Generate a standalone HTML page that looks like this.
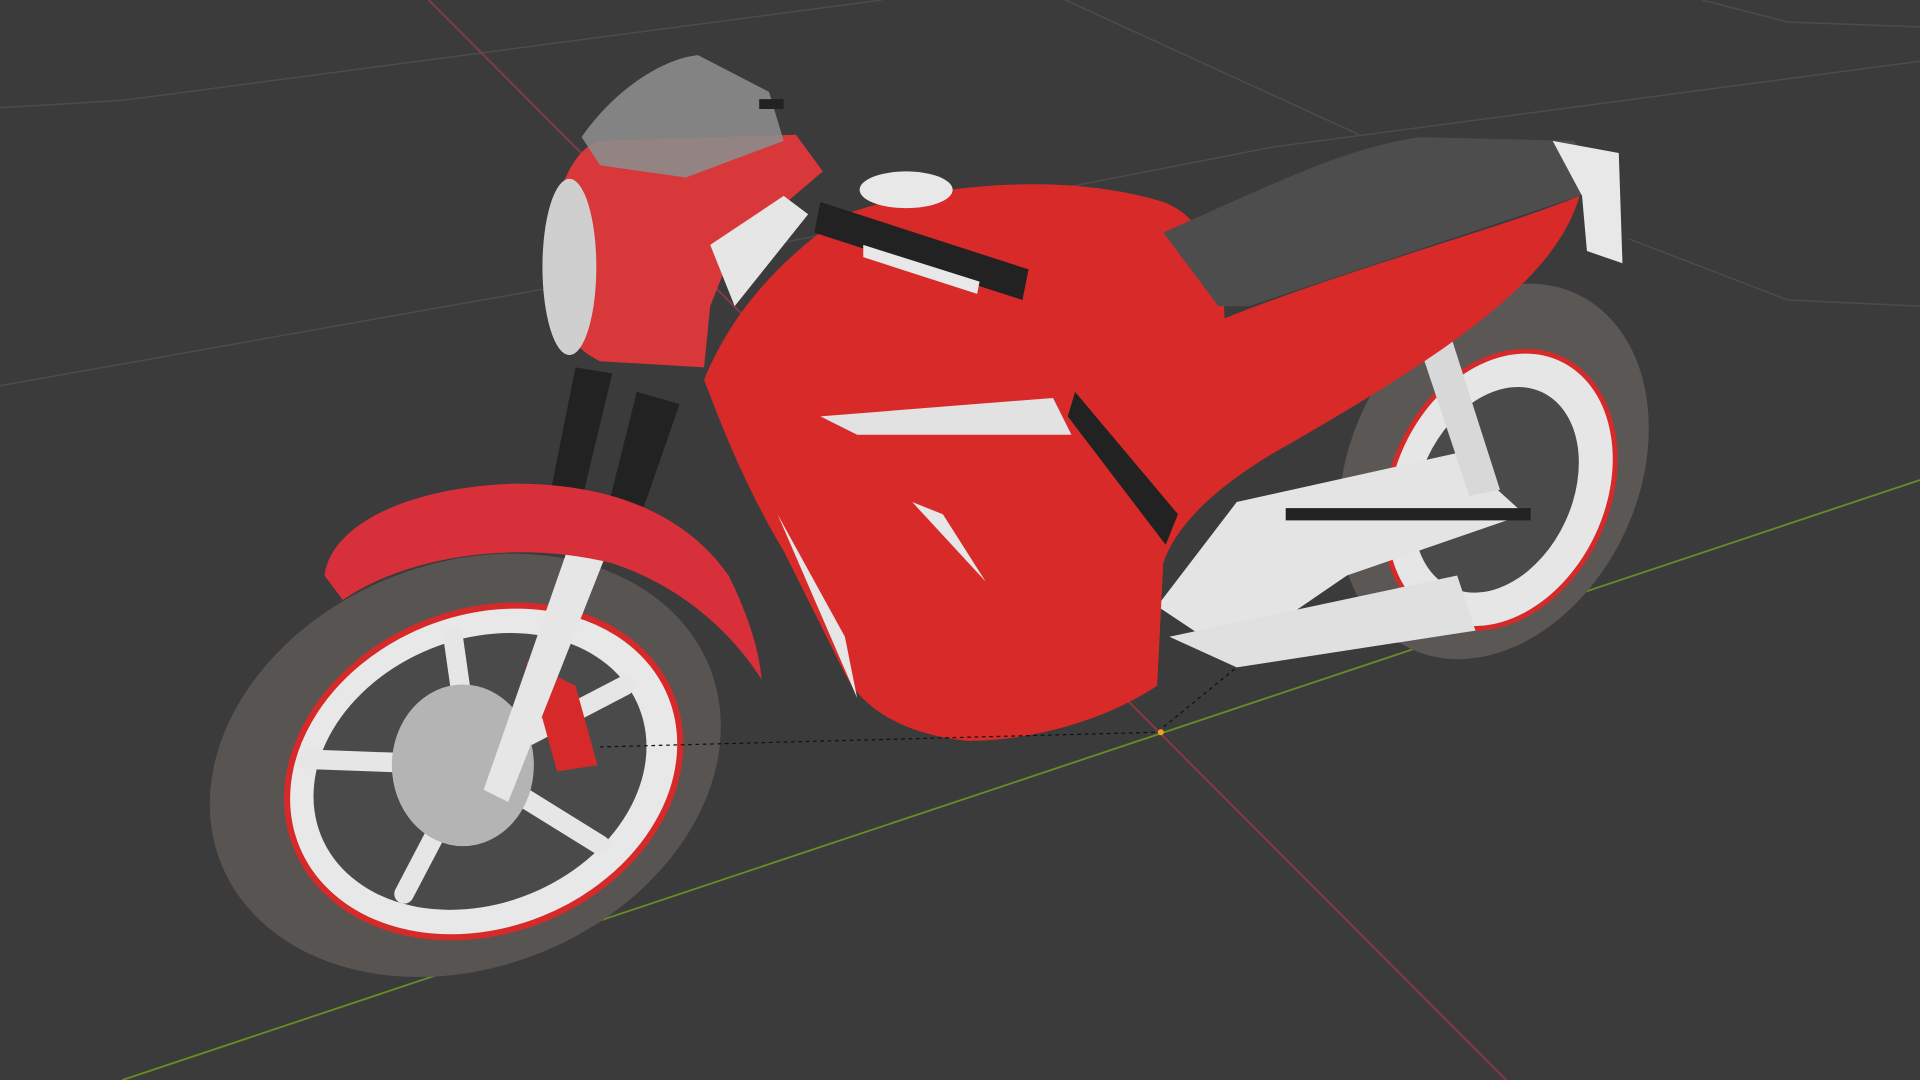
<!DOCTYPE html>
<html><head><meta charset="utf-8"><style>html,body{margin:0;padding:0;background:#3b3b3b;overflow:hidden}svg{display:block}</style></head><body>
<svg width="1920" height="1080" viewBox="0 0 1568 882" preserveAspectRatio="none" xmlns="http://www.w3.org/2000/svg">
<rect width="1568" height="882" fill="#3b3b3b"/>
<g stroke="#4c4c4c" stroke-width="1.2" fill="none">
<path d="M0 88 L100 82 L720 0"/>
<path d="M870 0 L1110 110"/>
<path d="M0 315 L450 235 L1040 120 L1568 50"/>
<path d="M1330 195 L1460 245 L1568 250"/>
<path d="M1390 0 L1460 18 L1568 22"/>
</g>
<line x1="350" y1="0" x2="1230" y2="882" stroke="#8a3a44" stroke-width="1.5"/>
<line x1="100" y1="882" x2="1568" y2="392" stroke="#6a8a2a" stroke-width="1.5"/>
<!-- rear wheel -->
<ellipse cx="1220" cy="385" rx="118" ry="160" transform="rotate(25 1220 385)" fill="#5a5754"/>
<ellipse cx="1225" cy="400" rx="88" ry="118" transform="rotate(25 1225 400)" fill="#e6e6e6" stroke="#d62a2a" stroke-width="4"/>
<ellipse cx="1222" cy="400" rx="62" ry="88" transform="rotate(25 1222 400)" fill="#4a4a4a"/>
<!-- swingarm & exhaust -->
<path d="M945 495 L1010 410 L1190 370 L1245 420 L1100 470 L1005 535 Z" fill="#e4e4e4"/>
<path d="M955 520 L1190 470 L1205 515 L1010 545 Z" fill="#e0e0e0"/>
<path d="M1160 285 L1185 275 L1225 400 L1200 405 Z" fill="#d8d8d8"/>
<path d="M1050 420 L1250 420" stroke="#222" stroke-width="10"/>
<!-- front wheel -->
<ellipse cx="380" cy="625" rx="215" ry="165" transform="rotate(-22 380 625)" fill="#575451"/>
<ellipse cx="395" cy="630" rx="165" ry="130" transform="rotate(-22 395 630)" fill="#e8e8e8" stroke="#d62a2a" stroke-width="5"/>
<ellipse cx="392" cy="630" rx="140" ry="108" transform="rotate(-22 392 630)" fill="#4a4a4a"/>
<g stroke="#e6e6e6" stroke-width="16" stroke-linecap="round">
<line x1="385" y1="625" x2="370" y2="520"/><line x1="385" y1="625" x2="510" y2="560"/>
<line x1="385" y1="625" x2="490" y2="690"/><line x1="385" y1="625" x2="330" y2="730"/><line x1="385" y1="625" x2="250" y2="620"/>
</g>
<ellipse cx="378" cy="625" rx="58" ry="66" fill="#b4b4b4"/>
<path d="M430 540 L470 560 L488 625 L455 630 Z" fill="#d62a2a"/>
<!-- forks -->
<path d="M470 300 L500 305 L470 430 L445 425 Z" fill="#222"/>
<path d="M520 320 L555 330 L515 445 L490 440 Z" fill="#222"/>
<path d="M470 430 L500 440 L415 655 L395 645 Z" fill="#e6e6e6"/>
<!-- front fender -->
<path d="M265 470 C270 430 330 398 420 395 C500 395 560 420 595 470 C610 500 620 530 622 555 C600 520 560 480 500 460 C420 440 330 455 280 490 Z" fill="#d8303a"/>
<!-- body -->
<path d="M575 310 C600 250 640 210 690 175 C760 150 870 140 950 165 C990 180 1000 230 1000 260 C1100 220 1230 185 1290 160 C1270 230 1180 290 1040 370 C990 400 960 430 950 460 L945 560 C900 590 840 605 790 605 C740 600 705 580 690 550 L640 450 C610 400 590 350 575 310 Z" fill="#d92a2a"/>
<path d="M670 340 L860 325 L875 355 L700 355 Z" fill="#e2e2e2"/>
<path d="M878 320 L962 420 L952 445 L872 340 Z" fill="#222"/>
<path d="M635 420 L700 570 L690 520 Z" fill="#e6e6e6"/>
<path d="M745 410 L805 475 L770 420 Z" fill="#e6e6e6"/>
<!-- seat -->
<path d="M950 190 C1040 150 1100 120 1160 112 L1285 115 C1300 130 1300 150 1290 160 L1020 250 L995 250 Z" fill="#4d4d4d"/>
<path d="M1268 115 L1322 125 L1325 215 L1296 205 L1292 160 Z" fill="#e8e8e8"/>
<!-- fairing -->
<path d="M445 205 C455 150 470 120 490 115 L650 110 L672 140 L625 180 L600 200 L580 250 L575 300 L490 295 C460 280 445 250 445 205 Z" fill="#d8383a"/>
<path d="M475 112 C500 75 540 48 570 45 L628 75 L640 115 L560 145 L490 135 Z" fill="#8c8c8c" opacity="0.9"/>
<ellipse cx="465" cy="218" rx="22" ry="72" fill="#cfcfcf"/>
<path d="M580 200 L640 160 L660 175 L600 250 Z" fill="#e6e6e6"/>
<!-- handlebar & cap -->
<ellipse cx="740" cy="155" rx="38" ry="15" fill="#e8e8e8"/>
<path d="M670 165 L840 220 L835 245 L665 190 Z" fill="#222"/>
<path d="M705 200 L800 230 L798 240 L705 210 Z" fill="#e8e8e8"/>
<line x1="620" y1="85" x2="640" y2="85" stroke="#222" stroke-width="8"/>
<path d="M490 610 L945 598 L1010 545" stroke="#111" stroke-dasharray="3 3" fill="none"/>
<circle cx="948" cy="598" r="2.5" fill="#f0a020"/>
</svg>
</body></html>
